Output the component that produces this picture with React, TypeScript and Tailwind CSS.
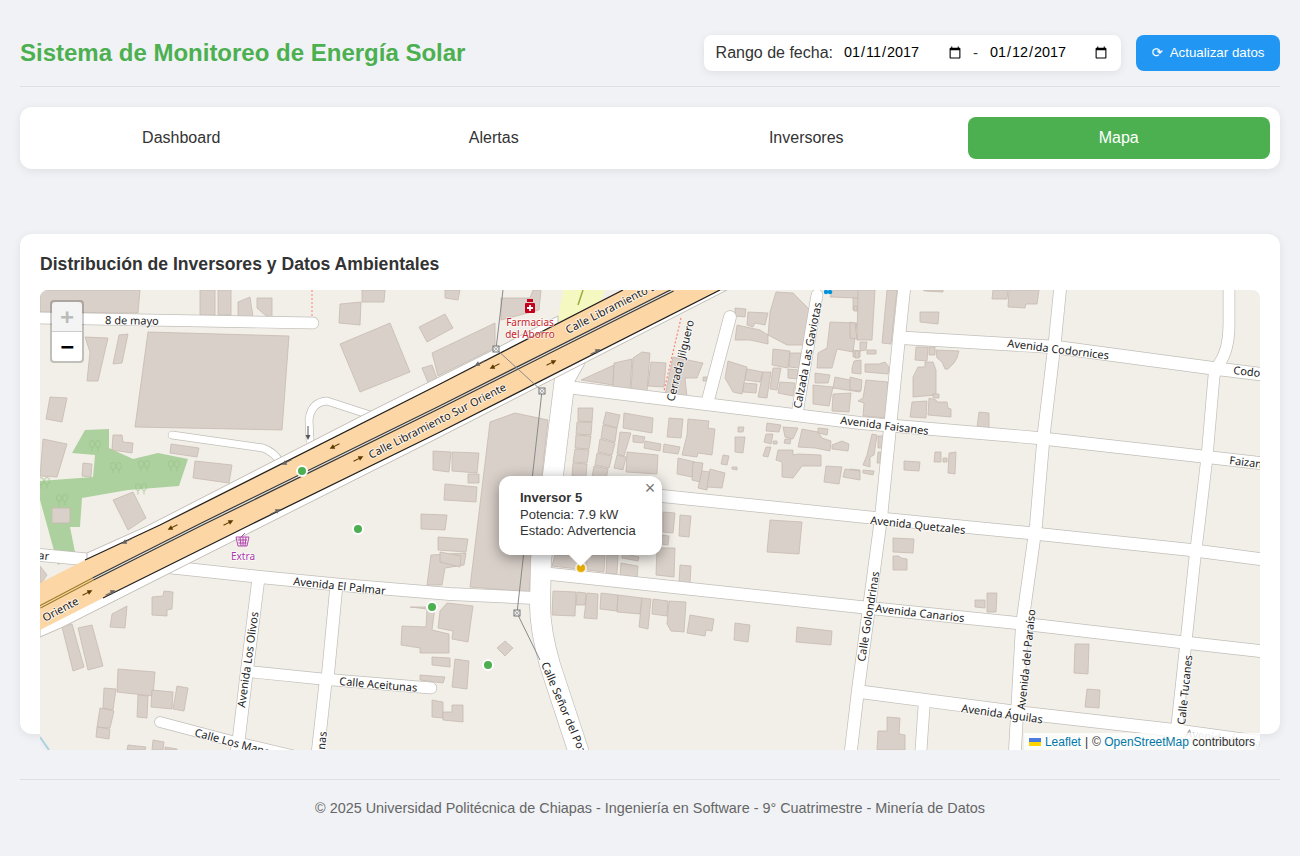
const tabs = ["Dashboard", "Alertas", "Inversores", "Mapa"];

// map data uses page coordinates, the svg viewBox starts at 40,290
const buildings = [
  "40,290 140,290 138,313 40,312", "200,290 215,290 215,315 200,315", "218,290 231,290 231,315 218,315",
  "238,302 250,297 253,317 238,317", "257,298 272,298 272,317 265,315 257,308", "362,290 385,290 384,302 362,302",
  "340,304 361,302 360,325 339,323", "445,290 460,290 458,300 445,298", "85,337 108,338 98,381 87,381 90,352",
  "119,335 128,334 122,363 113,364", "148,332 289,336 282,430 135,427", "390,323 410,372 360,392 340,344",
  "445,314 453,328 427,342 419,327", "495,323 495,348 438,376 432,353", "432,365 438,381 429,385 422,368",
  "50,397 67,398 62,422 46,419", "43,439 67,444 57,477 40,476", "113,435 122,435 123,442 133,443 132,453 112,450",
  "83,463 92,464 91,477 82,476", "171,444 199,448 197,457 170,453", "195,461 232,465 229,483 193,478",
  "113,500 133,492 146,518 128,530", "52,508 70,508 70,523 52,523", "433,451 451,452 449,472 433,470",
  "452,452 479,453 477,473 452,471", "445,484 477,487 476,502 444,500", "468,474 479,474 479,483 468,483",
  "421,514 447,515 445,530 421,529", "438,537 468,539 466,552 438,550", "427,585 431,555 466,553 464,565 445,568 442,585",
  "440,552 461,556 460,567 440,562", "490,422 515,413 548,420 529,592 470,587",
  "501,298 530,298 533,290 541,290 539,310 501,320",
  // bloque al este del libramiento
  "581,380 614,365 613,385", "614,363 632,359 630,389 613,387", "633,358 642,352 650,353 647,392 631,390",
  "651,362 666,363 664,387 648,386", "673,357 703,363 697,378 685,378 687,397 665,395", "703,377 707,377 707,381 703,381",
  "728,361 747,367 742,394 733,392 725,378", "747,369 763,372 760,382 745,380", "744,383 757,384 756,393 743,392",
  "763,372 771,372 767,398 758,397", "773,368 781,368 777,390 770,389", "780,382 795,383 793,396 778,393",
  "788,369 798,370 797,379 788,378", "773,349 790,351 788,368 772,365", "790,353 801,353 799,368 789,367",
  "735,308 746,309 745,317 735,316", "748,312 768,313 765,325 755,323 753,327 747,325",
  "737,325 760,330 768,335 768,344 750,340 735,340", "770,312 776,292 793,293 810,310 807,345 787,345 768,335",
  "830,322 857,323 853,352 837,349 832,368 817,368 818,353 827,348", "815,373 830,375 828,383 815,383",
  "835,377 860,382 860,392 833,388", "813,385 833,387 829,406 813,404", "833,394 851,393 849,412 832,411",
  "853,350 860,351 860,357 853,357", "853,290 860,290 860,310 853,310", "833,290 860,290 858,298 830,297",
  "858,290 875,290 872,340 857,340", "887,290 897,290 891,344 882,343", "850,322 855,323 857,339 850,338",
  "854,306 857,306 857,311 854,311", "923,290 943,290 943,292 925,291", "993,290 1008,290 1007,299 992,299",
  "1009,290 1039,290 1037,304 1026,304 1025,308 1008,307", "920,312 939,312 938,324 920,322",
  "916,347 928,347 927,361 915,360", "929,347 935,347 935,355 929,355",
  "936,350 959,351 957,358 954,363 948,369 945,369 942,362 937,358",
  "925,362 933,362 936,370 936,395 913,397 913,377 918,367 925,367", "933,394 939,394 939,398 933,398",
  "912,402 927,401 926,418 910,417", "929,398 936,400 937,402 947,402 948,408 951,409 951,417 928,415",
  "979,412 989,413 989,428 977,427", "860,342 867,342 866,350 860,351", "867,350 876,350 876,354 867,354",
  "855,351 859,351 859,358 855,358", "854,361 861,360 861,374 852,373 852,368",
  "865,364 879,364 885,362 889,367 888,374 865,372", "866,380 888,382 886,418 863,416 864,403 858,401 863,398",
  "850,377 862,380 861,391 850,390", "872,434 877,435 874,455 870,457 870,467 863,465 867,455",
  "878,436 883,436 882,448 878,448", "878,452 881,452 880,463 877,463", "850,469 860,470 859,478 850,477",
  "863,470 874,471 873,475 863,473", "904,461 920,462 919,471 904,470", "935,452 941,452 941,462 934,462",
  "943,458 947,458 947,462 943,462", "949,453 956,452 955,474 948,473",
  // manzana entre Faisanes y Quetzales
  "578,408 593,408 592,422 578,421", "577,422 592,422 591,435 576,434", "576,435 591,436 589,449 575,448",
  "575,449 589,450 587,463 573,462", "573,463 587,464 586,477 572,476", "606,412 620,415 617,428 603,424",
  "603,425 617,428 615,442 601,438", "600,439 615,443 612,455 598,452", "597,453 612,456 609,468 595,465",
  "594,466 608,469 606,480 592,477", "624,413 653,418 652,433 623,428", "633,435 645,437 643,443 633,442",
  "645,441 661,444 660,451 644,448", "620,432 631,433 624,456 617,454", "617,455 626,457 623,470 614,468",
  "627,452 658,455 657,474 626,472", "664,444 680,447 678,454 663,452", "669,418 683,419 681,438 667,437",
  "688,419 709,421 708,428 715,429 712,455 698,453 697,457 682,455 687,435", "678,458 695,462 692,477 677,474",
  "693,462 703,463 700,482 692,480", "702,471 710,472 707,490 698,488", "710,469 725,473 722,488 707,487",
  "723,455 729,456 727,465 721,464", "732,467 737,467 737,470 732,469", "738,427 744,427 743,432 738,432",
  "735,437 745,437 743,453 735,452", "767,423 781,425 779,432 766,431", "783,427 798,428 793,439 785,437",
  "766,434 773,434 771,444 764,442", "773,441 777,441 777,444 773,444", "785,439 791,439 790,444 784,443",
  "766,447 771,447 768,457 763,456", "802,429 818,432 822,438 831,441 830,451 815,448 798,447",
  "818,428 828,429 827,435 818,433", "832,445 842,441 849,444 848,451 832,449",
  "778,450 793,450 793,455 798,454 821,455 821,466 802,466 793,478 782,477 782,462 776,460",
  "826,466 842,467 839,484 824,482", "845,469 860,471 860,480 843,477",
  // manzana de la Avenida Canarios
  "555,555 587,555 586,570 552,566", "587,555 605,555 604,572 587,570", "607,555 618,555 617,574 606,573",
  "622,553 639,557 638,561 622,558", "621,563 638,566 637,578 620,576", "657,548 675,548 674,577 656,575",
  "680,565 691,566 690,583 679,582", "663,512 675,513 673,533 663,532", "680,515 691,516 689,537 679,536",
  "662,535 669,536 668,545 661,544", "770,520 802,522 799,554 767,552", "553,591 576,592 575,616 552,615",
  "577,592 586,593 585,605 576,605", "587,593 598,594 597,619 584,618", "601,593 618,595 617,611 600,609",
  "618,595 642,598 640,614 617,612", "642,598 651,599 648,629 639,627", "653,599 668,601 667,616 652,614",
  "669,601 686,602 684,632 671,631 667,624", "690,615 714,619 712,631 706,630 705,636 687,633",
  "735,623 750,625 748,642 734,640", "797,627 832,631 831,645 796,642",
  // sur-oeste
  "410,607 427,609 426,627 402,626 401,645 420,648 420,653 449,653 449,634 432,630 435,607",
  "447,603 473,606 468,642 452,639 453,631 438,628 440,611", "432,657 450,658 450,667 432,665",
  "455,659 469,661 467,689 452,687", "420,675 445,677 443,683 420,680", "432,700 443,702 443,718 432,717",
  "443,712 452,712 452,705 463,705 463,722 443,720", "505,641 513,648 505,656 497,648",
  "152,597 163,596 164,591 173,592 172,609 167,610 167,616 152,615", "127,606 125,628 110,627 112,614",
  "62,627 72,624 84,667 73,671", "78,628 92,625 103,666 88,670", "118,669 155,672 153,696 117,692",
  "152,690 173,692 172,709 151,707", "177,686 188,688 184,711 173,709", "138,695 148,696 147,718 137,717",
  "104,688 116,689 113,710 103,708", "100,708 114,711 110,728 97,727", "97,727 110,729 109,739 96,737",
  "128,745 146,747 145,750 127,750", "153,740 164,742 163,750 152,750", "165,747 177,749 177,750 165,750",
  "40,566 47,575 40,585",
  // este
  "893,538 914,539 913,553 893,552", "893,556 899,556 901,558 907,559 907,570 893,570",
  "975,600 985,600 985,608 975,607", "987,593 997,593 996,612 987,612", "1075,644 1089,644 1088,674 1074,673",
  "1087,689 1100,690 1099,708 1085,707", "887,717 900,718 899,734 905,735 905,750 877,750 878,731 887,731",
];

const roads: [string, number][] = [
  ["M40 318 L313 323", 11],
  ["M310 440 L309 420 Q311 402 327 401 L370 415", 7],
  ["M172 435 L263 448 Q274 452 280 462", 7],
  ["M905 338 L1055 347 L1211 368 L1260 374", 12.5],
  ["M575 388 L860 423 L896 426 L1038 438 L1207 457 L1260 463", 12],
  ["M556 484 L662 496 L885 519 L1029 533 L1191 550 L1260 559", 12],
  ["M551 574 L860 607 L1017 623 L1180 642 L1260 651", 12],
  ["M862 692 L1023 713 L1172 730 L1260 742", 12.5],
  ["M40 555 L177 568 L260 577 L342 585 L450 594 L535 598", 12],
  ["M904 290 L899 338 L881 518 L858 690 L851 750", 12],
  ["M1060 290 L1055 340 L1044 432 L1036 525 L1022 625 L1015 750", 12],
  ["M1229 290 L1229 325 Q1229 350 1219 364 L1214 376 L1207 457 L1199 525 L1195 557 L1186 642 L1177 725 L1173 750", 11],
  ["M924 707 L921 750", 11],
  ["M258 582 L247 670 L239 737 L237 750", 12],
  ["M336 590 L328 674 L325 687 L318 750", 12],
  ["M253 672 L322 679 L431 688", 11],
  ["M160 722 L232 741 L300 757", 10],
  ["M575 360 L565 378 L553 475 L541 560 L540 604 Q540 630 550 665 L578 750", 20],
  ["M817 295 L798 408", 11],
  ["M730 317 L708 400", 12],
];

const arrows: [number, number, string][] = [
  [335, 446, "#5b3a00"], [495, 366, "#5b3a00"], [173, 527, "#5b3a00"], [287, 462, "#666"], [127, 541, "#666"],
  [480, 363, "#666"],
];
const arrowsEast: [number, number, string][] = [
  [358, 459, "#5b3a00"], [228, 523, "#5b3a00"], [87, 593, "#5b3a00"], [551, 363, "#5b3a00"], [275, 512, "#666"],
  [110, 593, "#666"], [595, 352, "#666"],
];

const trees = [
  [95, 446], [116, 468], [144, 466], [174, 466], [141, 489], [62, 500], [44, 483],
];

const labels: [string, number, number, number][] = [
  ["8 de mayo", 105, 324, 1],
  ["Calle Libramiento Sur Oriente", 371, 459, -27],
  ["Calle Libramiento Sur Oriente", 568, 334, -27],
  ["Oriente", 45, 622, -28],
  ["Cerrada Jilguero", 674, 402, -76],
  ["Calzada Las Gaviotas", 801, 409, -79],
  ["Avenida Codornices", 1007, 347, 7],
  ["Codornices", 1233, 374, 6],
  ["Avenida Faisanes", 840, 424, 7],
  ["Faizanes", 1229, 464, 7],
  ["Avenida Quetzales", 870, 524, 6],
  ["Avenida Canarios", 875, 612, 6.5],
  ["Avenida El Palmar", 293, 585, 6],
  ["ar", 38, 559, 6],
  ["Avenida Los Olivos", 245, 708, -82],
  ["Calle Aceitunas", 339, 685, 5],
  ["Calle Los Mangos", 194, 736, 15],
  ["nas", 325, 750, -85],
  ["Calle Señor del Pozo", 541, 664, 67],
  ["Calle Golondrinas", 865, 662, -81],
  ["Avenida del Paraíso", 1025, 710, -84],
  ["Calle Tucanes", 1185, 725, -84],
  ["Avenida Águilas", 961, 712, 8],
];

function MapDrawing() {
  return (
    <svg viewBox="40 290 1220 460" width={1220} height={460} className="block">
      <rect x={40} y={290} width={1220} height={460} fill="#f2efe9" />
      <polygon points="563,290 605,290 593,328 583,365 553,348" fill="#f5f8c0" />
      <path d="M583 290 L578 305" stroke="#9aac3c" strokeWidth={1.5} />
      <polygon
        points="85,430 109,429 109,448 133,459 158,453 188,459 179,486 128,490 82,498 80,527 70,527 75,552 58,565 40,500 40,481 93,477 95,455 72,453"
        fill="#add19e"
      />
      {trees.map(([x, y]) => (
        <g key={`${x}-${y}`} fill="none" stroke="#98c288" strokeWidth={0.7}>
          <ellipse cx={x - 3} cy={y - 2} rx={2.5} ry={3.5} />
          <ellipse cx={x + 3} cy={y - 2} rx={2.5} ry={3.5} />
          <path d={`M${x - 3} ${y + 1.5} v4 M${x + 3} ${y + 1.5} v4`} />
        </g>
      ))}
      <g fill="#d9d0c9" stroke="#c6bab0" strokeWidth={0.8}>
        {buildings.map((p) => (
          <polygon key={p} points={p} />
        ))}
      </g>
      <path d="M312 290 V317" stroke="#fa8072" strokeWidth={1} strokeDasharray="2 2" fill="none" />
      <path d="M681 318 L663 395" stroke="#fa8072" strokeWidth={1.2} strokeDasharray="2 2" fill="none" />

      <g fill="none" stroke="#c2bfb9" strokeLinecap="round" strokeLinejoin="round">
        {roads.map(([d, w]) => (
          <path key={d} d={d} strokeWidth={w + 1.4} />
        ))}
      </g>
      <g fill="none" stroke="#ffffff" strokeLinecap="round" strokeLinejoin="round">
        {roads.map(([d, w]) => (
          <path key={d} d={d} strokeWidth={w} />
        ))}
      </g>

      {/* libramiento */}
      <polygon points="87,553 147,526 373,410 495,349 558,316 558,325 440,395 87,565" fill="#fff" stroke="#c2bfb9" strokeWidth={1} />
      <polygon points="40,637 63,627 273,521 440,437 727,290 700,290 440,425 40,625" fill="#fff" stroke="#c2bfb9" strokeWidth={1} />
      <polygon points="40,583 85,560 160,525 440,384 623,290 720,290 440,432 250,525 103,598 40,630" fill="#fcd6a4" />
      <path d="M85 560 L160 525 L440 384 L623 290" stroke="#222" strokeWidth={1.3} fill="none" />
      <path d="M103 598 L250 525 L440 432 L720 290" stroke="#222" strokeWidth={1.3} fill="none" />
      <path d="M93 579 L200 525 L440 407 L673 290" stroke="#3a3a3a" strokeWidth={3.6} fill="none" />
      <path d="M93 579 L200 525 L440 407 L673 290" stroke="#e8e4dc" strokeWidth={1.2} fill="none" />
      <path d="M40 607 L93 579" stroke="#9a7d2c" strokeWidth={3.4} fill="none" />
      <path d="M40 607 L93 579" stroke="#fcd6a4" strokeWidth={1.2} fill="none" />

      {arrows.map(([x, y, c]) => (
        <g key={`w${x}`} transform={`translate(${x} ${y}) rotate(153)`} stroke={c} fill={c}>
          <path d="M-5 0 H3" strokeWidth={1} />
          <path d="M1 -2.5 L6 0 L1 2.5 Z" strokeWidth={0} />
        </g>
      ))}
      {arrowsEast.map(([x, y, c]) => (
        <g key={`e${x}`} transform={`translate(${x} ${y}) rotate(-27)`} stroke={c} fill={c}>
          <path d="M-5 0 H3" strokeWidth={1} />
          <path d="M1 -2.5 L6 0 L1 2.5 Z" strokeWidth={0} />
        </g>
      ))}
      <path d="M308 426 V436" stroke="#555" strokeWidth={1} />
      <path d="M305.5 435 H310.5 L308 440 Z" fill="#555" />

      {/* linea gris con nodos */}
      <path d="M503 290 L496 349 L542 391 L517 613 L540 660" stroke="#8a8a8a" strokeWidth={1} fill="none" />
      {[[496, 349], [542, 391], [517, 613]].map(([x, y]) => (
        <g key={x} stroke="#777" fill="#eee" strokeWidth={1}>
          <rect x={x - 3} y={y - 3} width={6} height={6} />
          <path d={`M${x - 3} ${y - 3} l6 6 M${x + 3} ${y - 3} l-6 6`} strokeWidth={0.5} />
        </g>
      ))}

      <g className="font-['Noto_Sans',sans-serif]" fontSize={11} fill="#222" stroke="#fff" strokeWidth={2} strokeOpacity={0.7} paintOrder="stroke">
        {labels.map(([t, x, y, r]) => (
          <text key={`${t}-${x}`} x={x} y={y} transform={`rotate(${r} ${x} ${y})`}>
            {t}
          </text>
        ))}
      </g>
      <text x={1185} y={737} transform="rotate(8 1185 737)" fontSize={11} fill="#999" className="font-['Noto_Sans',sans-serif]">
        Avenida Águilas
      </text>

      {/* farmacia */}
      <rect x={527} y={299} width={6} height={3} fill="#c4001a" />
      <rect x={525} y={303} width={10} height={10} rx={1} fill="#c4001a" />
      <path d="M530 305 V311 M527 308 H533" stroke="#fff" strokeWidth={1.8} />
      <g className="font-['Noto_Sans',sans-serif]" fontSize={10} fill="#c8232c" stroke="#fff" strokeWidth={1.6} strokeOpacity={0.7} paintOrder="stroke" textAnchor="middle">
        <text x={530} y={326}>Farmacias</text>
        <text x={530} y={338}>del Aborro</text>
      </g>

      {/* super */}
      <g stroke="#ac39ac" fill="none" strokeWidth={0.9}>
        <path d="M236 537 H249 L247 546 H238 Z M238 540 H247 M238.5 543 H246.5 M240 537 L241 546 M243 537 V546 M246 537 L245 546 M241 537 L245 533" />
      </g>
      <text x={243} y={560} fontSize={10} textAnchor="middle" fill="#ac39ac" stroke="#fff" strokeWidth={1.6} strokeOpacity={0.7} paintOrder="stroke" className="font-['Noto_Sans',sans-serif]">
        Extra
      </text>

      {/* bici */}
      <g fill="#0092da">
        <circle cx={826} cy={292} r={2.2} />
        <circle cx={830} cy={292} r={2.2} />
      </g>

      <g stroke="#fff" strokeWidth={2} fill="#4caf50">
        <circle cx={302} cy={471} r={5} />
        <circle cx={358} cy={529} r={5} />
        <circle cx={432} cy={607} r={5} />
        <circle cx={488} cy={665} r={5} />
      </g>
      <circle cx={581} cy={568} r={5} fill="#eaae00" stroke="#fff" strokeOpacity={0.8} strokeWidth={2} />

      {/* esquina inferior izquierda del mapa */}
      <polygon points="40,738 49,750 40,750" fill="#eceef2" />
      <path d="M40 737 L49 750" stroke="#aad3df" strokeWidth={2} />
    </svg>
  );
}

export default function App() {
  return (
    <div className="min-h-[856px] bg-[#f0f2f5] px-5 font-['Liberation_Sans',sans-serif] text-[#333]">
      <header className="flex h-[87px] items-center justify-between border-b border-[#e0e0e0] pt-5">
        <h1 className="text-2xl font-bold text-[#4caf50]">Sistema de Monitoreo de Energía Solar</h1>
        <div className="flex items-center gap-[15px]">
          <div className="flex h-9 items-center rounded-lg bg-white pl-3 pr-2 shadow-[0_2px_8px_rgba(0,0,0,0.08)]">
            <label className="mr-[7px] text-base">Rango de fecha:</label>
            <input
              type="date"
              defaultValue="2017-01-11"
              className="w-[127px] px-[3px] text-[14.4px] text-black outline-none"
            />
            <span className="mr-2 ml-1.5 text-[15px]">-</span>
            <input
              type="date"
              defaultValue="2017-01-12"
              className="w-[127px] px-[3px] text-[14.4px] text-black outline-none"
            />
          </div>
          <button className="flex h-9 w-[144px] items-center justify-center gap-[7px] rounded-lg bg-[#2196f3] text-[13.33px] text-white">
            <span className="font-['DejaVu_Sans',sans-serif]">⟳</span>
            Actualizar datos
          </button>
        </div>
      </header>

      <nav className="mt-5 grid h-[62px] grid-cols-4 gap-2.5 rounded-xl bg-white p-2.5 shadow-[0_2px_10px_rgba(0,0,0,0.08)]">
        {tabs.map((t) => (
          <button
            key={t}
            className={
              t === "Mapa"
                ? "rounded-lg bg-[#4caf50] text-base text-white"
                : "rounded-lg text-base text-[#333]"
            }
          >
            {t}
          </button>
        ))}
      </nav>

      <section className="mt-[65px] h-[500px] rounded-xl bg-white p-5 shadow-[0_2px_10px_rgba(0,0,0,0.08)]">
        <h2 className="mb-[15px] text-[17.6px] leading-[21px] font-bold">Distribución de Inversores y Datos Ambientales</h2>
        <div className="relative h-[460px] overflow-hidden rounded-lg">
          <MapDrawing />

          <div className="absolute top-[10px] left-[10px] w-[34px] rounded border-2 border-black/20 bg-clip-padding font-['DejaVu_Sans_Mono',monospace] text-[22px] font-bold">
            <div className="flex h-[30px] items-center justify-center rounded-t-sm border-b border-[#ccc] bg-[#f4f4f4] text-[#bbb]">+</div>
            <div className="flex h-[29px] items-center justify-center rounded-b-sm bg-white text-black">−</div>
          </div>

          <div className="absolute top-[186px] left-[459px] h-[79px] w-[163px] rounded-xl bg-white pt-[14px] pr-6 pl-[21px] text-[13px] leading-[16.5px] text-[#333] shadow-[0_3px_14px_rgba(0,0,0,0.4)]">
            <div className="absolute top-0 right-0 flex h-6 w-6 items-center justify-center text-lg leading-none text-[#757575]">×</div>
            <b>Inversor 5</b>
            <br />
            Potencia: 7.9 kW
            <br />
            Estado: Advertencia
            <div className="absolute top-full left-[61px] h-3 w-10 overflow-hidden">
              <div className="mx-auto -mt-[9px] h-[17px] w-[17px] rotate-45 bg-white" />
            </div>
          </div>

          <div className="absolute right-0 bottom-0 flex h-[17px] items-center bg-white/80 pr-[5px] pl-[5px] text-xs text-[#333]">
            <svg width={12} height={8} viewBox="0 0 12 8" className="mr-[4px]">
              <rect width={12} height={4} fill="#4c7be1" />
              <rect y={4} width={12} height={4} fill="#ffd500" />
            </svg>
            <span className="text-[#0078a8]">Leaflet</span>
            <span className="mx-1">|</span>
            <span>©&nbsp;</span>
            <span className="text-[#0078a8]">OpenStreetMap</span>
            <span>&nbsp;contributors</span>
          </div>
        </div>
      </section>

      <footer className="mt-[45px] border-t border-[#e0e0e0] pt-5 text-center text-[14.4px] leading-[17px] text-[#666]">
        © 2025 Universidad Politécnica de Chiapas - Ingeniería en Software - 9° Cuatrimestre - Minería de Datos
      </footer>
    </div>
  );
}
